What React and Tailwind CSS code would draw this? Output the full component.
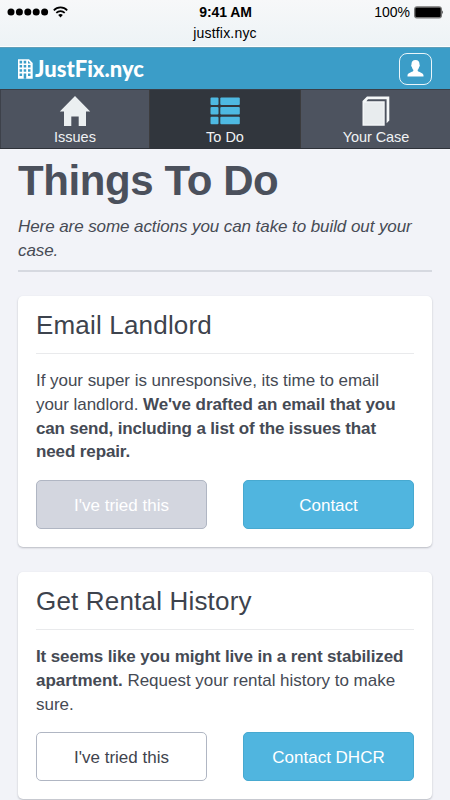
import React from 'react';

function Line({ children, spacing = '' }) {
  return <span className={`block whitespace-nowrap ${spacing}`}>{children}</span>;
}

function StatusBar() {
  return (
    <div className="h-[47px] bg-linear-to-b from-[#f7f8f9] to-[#edf3f6] text-black border-b border-[#fdfdfd]">
      <div className="grid grid-cols-3 items-center h-[24px] pl-[7px] pr-[6px]">
        <div className="flex items-center gap-[4px]">
          <svg width="42" height="8" viewBox="0 0 42 8">
            <circle cx="4" cy="4" r="3.5" />
            <circle cx="12.4" cy="4" r="3.5" />
            <circle cx="20.8" cy="4" r="3.5" />
            <circle cx="29.2" cy="4" r="3.5" />
            <circle cx="37.6" cy="4" r="3.5" />
          </svg>
          <svg width="15" height="12" viewBox="0 0 15 12" fill="none" stroke="#000" strokeWidth="1.7">
            <path d="M0.8 4.3C4.4 0.5 10.6 0.5 14.2 4.3" />
            <path d="M3.3 6.9C5.7 4.5 9.3 4.5 11.7 6.9" />
            <path d="M7.5 11.4L5.2 8.9C6.4 7.8 8.6 7.8 9.8 8.9Z" fill="#000" stroke="none" />
          </svg>
        </div>
        <span className="text-center text-[14px] font-bold leading-none tracking-[-0.1px]">9:41 AM</span>
        <div className="flex items-center justify-end gap-[4px]">
          <span className="text-[14px] leading-none">100%</span>
          <svg width="30" height="13" viewBox="0 0 30 13">
            <rect x="0.5" y="0.8" width="27" height="11.2" rx="2" fill="#777" stroke="#777" strokeWidth="1" />
            <rect x="1.4" y="1.8" width="25.2" height="9.2" rx="1.2" />
            <path d="M28.4 4.3Q30 6.4 28.4 8.5Z" />
          </svg>
        </div>
      </div>
      <div className="pt-px text-center text-[14px] tracking-[0.2px] leading-[16px]">justfix.nyc</div>
    </div>
  );
}

function Header() {
  return (
    <header className="flex items-center justify-between h-[42px] bg-[#3b9dc8] pl-[18px] pr-[18px] border-t border-[#5f9fb9] text-white">
      <div className="flex items-center gap-[2px]">
        <svg width="15" height="20" viewBox="0 0 15 20">
          <path d="M0 0.3H11L14.7 4V19.7H0Z" fill="#fff" />
          <g fill="#3b9dc8">
            <path d="M1.6 1.8h2.5v2.6H1.6zM5.7 1.8h2.5v2.6H5.7zM10 1.8l2.7 2.6H10zM1.6 6h2.5v2.6H1.6zM5.7 6h2.5v2.6H5.7zM10 6h2.5v2.6H10zM1.6 10.2h2.5v2.6H1.6zM5.7 10.2h2.5v2.6H5.7zM10 10.2h2.5v2.6H10zM1.6 14.4h2.5V17H1.6zM5.7 14.4h2.5V19.7H5.7zM10 14.4h2.5V17H10z" />
          </g>
        </svg>
        <span className="font-['Lato'] font-black text-[22px] leading-[24px]">JustFix.nyc</span>
      </div>
      <button className="flex items-center justify-center w-[33px] h-[32px] rounded-[8px] border-[1.5px] border-[#eaf5fa]">
        <svg width="17" height="17" viewBox="0 0 17 17" fill="#fff">
          <path d="M8.5 0C11.3 0 12.7 1.8 12.5 4.5C13.1 5 12.8 6.5 12.1 6.9C11.8 8.3 11.2 9.2 10.7 9.8V11.1C12 12.3 16.5 12.8 16.5 15.5V16.5H0.5V15.5C0.5 12.8 5 12.3 6.3 11.1V9.8C5.8 9.2 5.2 8.3 4.9 6.9C4.2 6.5 3.9 5 4.5 4.5C4.3 1.8 5.7 0 8.5 0Z" />
        </svg>
      </button>
    </header>
  );
}

function HomeIcon() {
  return (
    <svg width="32" height="30" viewBox="0 0 32 30">
      <path d="M16 0L31.2 15.5H27V30H19.7V20.5H12.3V30H5V15.5H0.8Z" fill="#ebeff1" />
    </svg>
  );
}

function ListIcon() {
  return (
    <svg width="30" height="28" viewBox="0 0 30 28" fill="#4eb9e2">
      <rect x="0.5" y="0.5" width="8" height="7.5" rx="1" />
      <rect x="10.3" y="0.5" width="19.5" height="7.5" rx="1" />
      <rect x="0.5" y="10" width="8" height="7.5" rx="1" />
      <rect x="10.3" y="10" width="19.5" height="7.5" rx="1" />
      <rect x="0.5" y="19.8" width="8" height="7.5" rx="1" />
      <rect x="10.3" y="19.8" width="19.5" height="7.5" rx="1" />
    </svg>
  );
}

function BookIcon() {
  return (
    <svg width="28" height="30" viewBox="0 0 28 30">
      <path d="M0.5 5L5 0.5H27.3V24.5L24.6 27.3V3.2H6L4.4 5.2H22.7V29.7H0.5Z" fill="#f5f8f9" />
      <path d="M1.8 6.5H21.5V28.5H1.8Z" fill="#e8ecee" />
    </svg>
  );
}

function Nav() {
  const item = 'flex flex-col items-center text-[14.5px] leading-[16px]';
  return (
    <nav className="grid grid-cols-[149px_152px_149px] h-[60px] border-t border-[#3a3f48] border-b-[1.5px] border-b-[#2e3239] text-[#f0f2f4]">
      <div className={`${item} bg-[#4d535f] pt-[6px] border-l border-[#3d414a] gap-[3px]`}>
        <HomeIcon />
        <span>Issues</span>
      </div>
      <div className={`${item} bg-[#31363d] pt-[7px] border-x border-[#3c3c3e] gap-[4px]`}>
        <ListIcon />
        <span>To Do</span>
      </div>
      <div className={`${item} bg-[#4d535f] pt-[6px] pl-px gap-[3px]`}>
        <BookIcon />
        <span className="tracking-[-0.1px]">Your Case</span>
      </div>
    </nav>
  );
}

function Card({ title, children, tried, action }) {
  return (
    <section className="bg-white rounded-[5px] px-[18px] pb-[18px] shadow-[0_1px_2px_rgba(60,65,80,0.32)]">
      <h2 className="h-[58px] pt-[14px] border-b border-[#e9eaec] text-[26px] leading-[30px] tracking-[0.18px] text-[#3d434d] whitespace-nowrap">
        {title}
      </h2>
      <p className="pt-[15px] text-[17px] leading-[23.75px] text-[#454a54]">{children}</p>
      <div className="grid grid-cols-2 gap-[36px] pt-[16px] text-[17px]">
        <button
          className={
            tried
              ? 'h-[49px] pt-[2px] rounded-[5px] border border-[#b0b6c3] bg-[#d3d6df] text-white'
              : 'h-[49px] pt-[2px] rounded-[5px] border border-[#b0b6c3] bg-white text-[#3f444e]'
          }
        >
          I've tried this
        </button>
        <button className="h-[49px] pt-[2px] rounded-[5px] border border-[#47a9d0] bg-[#50b5df] text-white">
          {action}
        </button>
      </div>
    </section>
  );
}

export default function App() {
  return (
    <div className="w-[450px] h-[800px] overflow-hidden bg-[#f2f3f8] font-['Liberation_Sans',Arial,sans-serif]">
      <StatusBar />
      <Header />
      <Nav />
      <main className="px-[18px] pt-[7px]">
        <h1 className="text-[42px] leading-[50px] tracking-[-0.4px] font-bold text-[#4b505c] whitespace-nowrap">
          Things To Do
        </h1>
        <p className="mt-[9px] pb-[8px] border-b-2 border-[#d6d9e0] text-[17px] leading-[23.5px] tracking-[-0.08px] italic text-[#474b55]">
          <Line>Here are some actions you can take to build out your</Line>
          <Line>case.</Line>
        </p>
        <div className="flex flex-col gap-[25px] pt-[24px]">
          <Card title="Email Landlord" tried action="Contact">
            <Line spacing="tracking-[-0.04px]">If your super is unresponsive, its time to email</Line>
            <Line spacing="tracking-[-0.05px]">
              your landlord. <b>We've drafted an email that you</b>
            </Line>
            <Line spacing="tracking-[-0.15px]">
              <b>can send, including a list of the issues that</b>
            </Line>
            <Line spacing="tracking-[-0.12px]">
              <b>need repair.</b>
            </Line>
          </Card>
          <Card title="Get Rental History" action="Contact DHCR">
            <Line spacing="tracking-[-0.12px]">
              <b>It seems like you might live in a rent stabilized</b>
            </Line>
            <Line spacing="tracking-[-0.02px]">
              <b>apartment.</b> Request your rental history to make
            </Line>
            <Line>sure.</Line>
          </Card>
        </div>
      </main>
    </div>
  );
}
